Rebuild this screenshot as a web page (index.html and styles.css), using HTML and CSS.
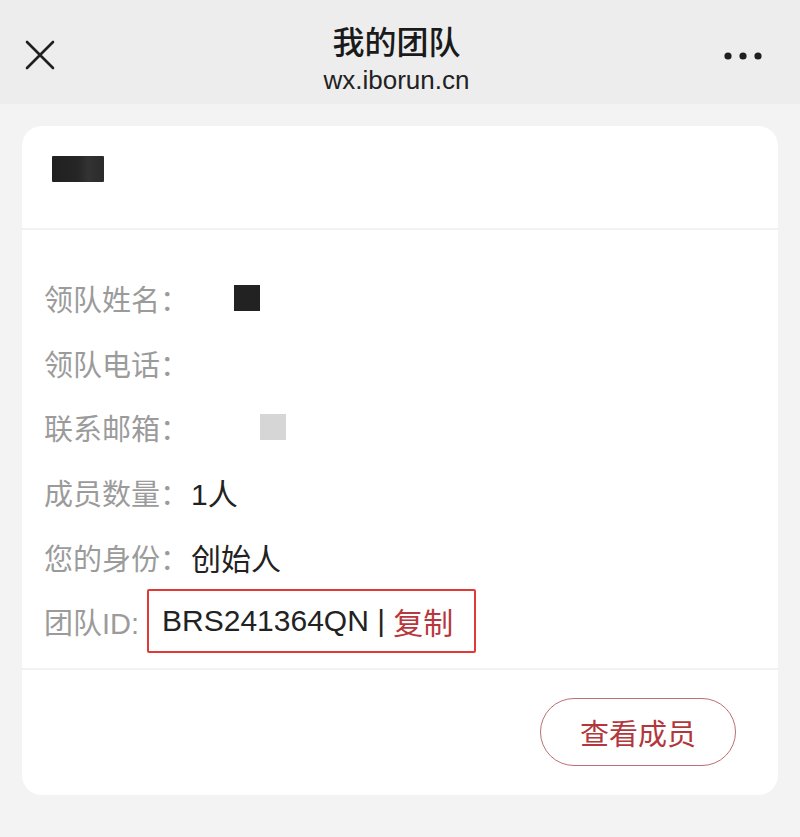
FILE: index.html
```html
<!DOCTYPE html>
<html lang="zh">
<head>
    <meta charset="UTF-8">
    <meta name="viewport" content="width=device-width, initial-scale=1.0">
    <title>我的团队</title>
    <link rel="stylesheet" href="styles.css">
</head>
<body>
    <div class="topbar">
        <svg class="close-icon" width="30" height="30" viewBox="0 0 30 30">
            <path d="M2 2 L28 28 M28 2 L2 28" stroke="#1f1f1f" stroke-width="2.6" stroke-linecap="round" fill="none"/>
        </svg>
        <div class="title-wrap">
            <div class="title">我的团队</div>
            <div class="subtitle">wx.iborun.cn</div>
        </div>
        <svg class="more-icon" width="38" height="10" viewBox="0 0 38 10">
            <circle cx="4" cy="5" r="3.6" fill="#1f1f1f"/>
            <circle cx="19" cy="5" r="3.6" fill="#1f1f1f"/>
            <circle cx="34" cy="5" r="3.6" fill="#1f1f1f"/>
        </svg>
    </div>

    <div class="page">
        <div class="card">
            <div class="card-head">
                <span class="mask mask-title"></span>
            </div>
            <div class="info">
                <div class="row">
                    <span class="label">领队姓名：</span>
                    <span class="mask mask-name"></span>
                </div>
                <div class="row">
                    <span class="label">领队电话：</span>
                </div>
                <div class="row">
                    <span class="label">联系邮箱：</span>
                    <span class="mask mask-mail"></span>
                </div>
                <div class="row">
                    <span class="label">成员数量：</span>
                    <span class="value">1人</span>
                </div>
                <div class="row">
                    <span class="label">您的身份：</span>
                    <span class="value">创始人</span>
                </div>
                <div class="row">
                    <span class="label">团队ID:</span>
                    <span class="id-box">
                        <span class="value">BRS241364QN | </span><span class="copy">复制</span>
                    </span>
                </div>
            </div>
            <div class="card-foot">
                <button class="members-btn">查看成员</button>
            </div>
        </div>
    </div>
</body>
</html>
```

FILE: styles.css
```css
body {
    margin: 0;
    background: #f3f3f3;
    font-family: 'Liberation Sans', 'Noto Sans CJK SC', sans-serif;
    color: #222;
}
.topbar {
    height: 104px;
    background: #ededed;
    display: flex;
    align-items: center;
    justify-content: space-between;
    padding: 0 38px 0 25px;
}
.close-icon {
    margin-top: 6px;
}
.more-icon {
    margin-top: 8px;
}
.title-wrap {
    text-align: center;
    margin-left: 14px;
    margin-top: 16px;
}
.title {
    font-size: 32px;
    font-weight: 500;
    line-height: 40px;
    color: #1a1a1a;
}
.subtitle {
    font-size: 26px;
    line-height: 34px;
    color: #222;
}
.page {
    padding: 22px 22px 0;
}
.card {
    background: #fff;
    border-radius: 20px;
    overflow: hidden;
}
.card-head {
    height: 104px;
    padding: 30px 30px 0;
    box-sizing: border-box;
    border-bottom: 2px solid #f2f2f2;
}
.mask {
    display: inline-block;
}
.mask-title {
    width: 52px;
    height: 26px;
    background: linear-gradient(90deg, #202020 0%, #262626 50%, #333 70%, #2a2a2a 100%);
    border-radius: 1px;
}
.mask-name {
    width: 26px;
    height: 26px;
    background: #222;
    margin-left: 45px;
}
.mask-mail {
    width: 26px;
    height: 26px;
    background: #d6d6d6;
    margin-left: 71px;
}
.info {
    padding: 36px 22px 14px;
    border-bottom: 2px solid #f2f2f2;
}
.row {
    height: 64.6px;
    display: flex;
    align-items: center;
    font-size: 29px;
}
.label {
    color: #9b9b9b;
}
.value {
    color: #222;
    font-size: 30px;
    margin-left: 2px;
}
.id-box {
    margin-left: 8px;
    height: 64px;
    width: 329px;
    box-sizing: border-box;
    border: 2px solid #e03a36;
    border-radius: 2px;
    padding-left: 13px;
    display: flex;
    align-items: center;
    white-space: pre;
}
.id-box .value {
    margin-left: 0;
}
.copy {
    color: #b8373c;
    font-size: 30px;
}
.card-foot {
    height: 125px;
    display: flex;
    align-items: center;
    justify-content: flex-end;
    padding-right: 42px;
}
.members-btn {
    width: 196px;
    height: 68px;
    border: 1.5px solid #b87070;
    border-radius: 34px;
    background: #fff;
    color: #b2373d;
    font-family: 'Liberation Sans', 'Noto Sans CJK SC', sans-serif;
    font-size: 29px;
    cursor: pointer;
}
```
